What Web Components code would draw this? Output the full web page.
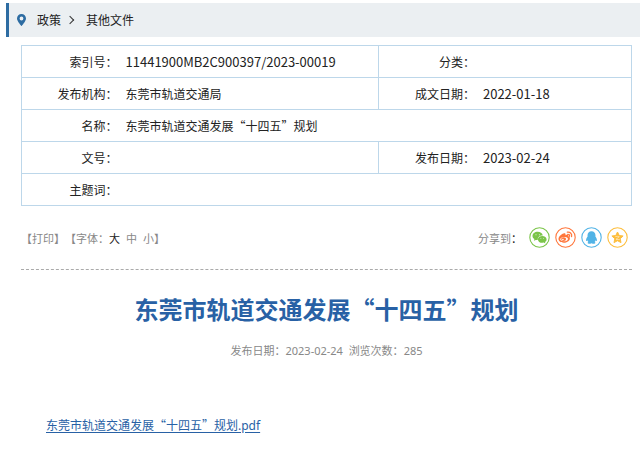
<!DOCTYPE html>
<html lang="zh-CN">
<head>
<meta charset="utf-8">
<title>东莞市轨道交通发展“十四五”规划</title>
<style>
  body { margin: 0; background: #fff; color: #222; font: 12px/20px "Noto Sans CJK SC", sans-serif; --latin: "Noto Sans", "Open Sans", sans-serif; --blue: #2861a5; --line: #bdd7ea; --muted: #888; }
</style>
</head>
<body>
<policy-page>
  <crumb-bar slot="crumbs"><a href="#policy">政策</a><a href="#other">其他文件</a></crumb-bar>
  <info-table></info-table>
  <doc-tools></doc-tools>
  <doc-article>
    <span slot="title">东莞市轨道交通发展“十四五”规划</span>
    <file-link slot="file"></file-link>
  </doc-article>
</policy-page>

<script>
const define = (name, html) => {
  const template = document.createElement('template');
  template.innerHTML = html;
  customElements.define(name, class extends HTMLElement {
    constructor() {
      super();
      this.attachShadow({ mode: 'open' }).append(template.content.cloneNode(true));
    }
  });
};

define('policy-page', `
  <style>
    :host { display: block; padding-top: 3px; }
    header { margin-left: 6px; }
    main { padding: 8px 8px 0 21px; }
  </style>
  <header><slot name="crumbs"></slot></header>
  <main><slot></slot></main>`);

define('crumb-bar', `
  <style>
    :host { display: flex; align-items: center; height: 34px; padding-left: 8px; border-left: 3px solid #2d6ca2; background: #ebeff2; }
    svg { width: 9px; height: 12px; margin-right: 11px; }
    nav { display: flex; align-items: center; position: relative; }
    ::slotted(a) { color: #222; text-decoration: none; }
    ::slotted(a:not(:last-child)) { margin-right: 25px; }
    i { position: absolute; left: 30px; top: 7px; width: 5px; height: 5px; border: solid #333; border-width: 1px 1px 0 0; transform: rotate(45deg); }
  </style>
  <svg viewBox="0 0 9 12" aria-hidden="true"><path fill="#2d6ca2" fill-rule="evenodd" d="M4.5 0C2 0 0 1.9 0 4.4 0 7.2 4.5 12 4.5 12S9 7.2 9 4.4C9 1.9 7 0 4.5 0Zm0 2.6a1.9 1.9 0 1 1 0 3.8 1.9 1.9 0 0 1 0-3.8Z"/></svg>
  <nav aria-label="当前位置"><slot></slot><i></i></nav>`);

define('info-table', `
  <style>
    :host { display: block; }
    table { width: 100%; table-layout: fixed; border-collapse: collapse; border: 1px solid var(--line); }
    col:nth-child(odd) { width: 16.4%; }
    col:nth-child(2) { width: 42.2%; }
    tr { height: 32px; border-bottom: 1px solid var(--line); }
    th, td { padding: 0 4px; font-weight: 400; line-height: 20px; }
    th { text-align: right; }
    td { text-align: left; }
    td + th { border-left: 1px solid var(--line); }
    .latin { font-size: 13px; }
  </style>
  <table>
    <colgroup><col><col><col><col></colgroup>
    <tbody>
      <tr><th scope="row">索引号：</th><td class="latin">11441900MB2C900397/2023-00019</td><th scope="row">分类：</th><td></td></tr>
      <tr><th scope="row">发布机构：</th><td>东莞市轨道交通局</td><th scope="row">成文日期：</th><td class="latin">2022-01-18</td></tr>
      <tr><th scope="row">名称：</th><td colspan="3">东莞市轨道交通发展“十四五”规划</td></tr>
      <tr><th scope="row">文号：</th><td></td><th scope="row">发布日期：</th><td class="latin">2023-02-24</td></tr>
      <tr><th scope="row">主题词：</th><td colspan="3"></td></tr>
    </tbody>
  </table>`);

define('doc-tools', `
  <style>
    :host { display: flex; justify-content: space-between; align-items: center; height: 63px; border-bottom: 1px dashed #aaa; font-size: 11px; color: var(--muted); }
    div { display: flex; align-items: center; }
    button { border: 0; padding: 0; background: none; font: inherit; color: inherit; cursor: pointer; }
    .size { display: flex; gap: 6px; }
    .on, b { color: #222; }
    b { font-weight: 400; }
    .share { gap: 5px; padding-right: 4px; }
    .share span { margin-right: 2px; }
  </style>
  <div><button>【打印】</button><span>【字体：</span><span class="size"><button class="on">大</button><button>中</button><button>小</button></span><span>】</span></div>
  <div class="share"><span>分享到<b>：</b></span><share-icon kind="wechat"></share-icon><share-icon kind="weibo"></share-icon><share-icon kind="qq"></share-icon><share-icon kind="qzone"></share-icon></div>`);

const icons = {
  wechat: ['微信', '#7bc549', '<path fill="currentColor" d="M8.700 4.800c-3 0-5.200 1.900-5.200 4.200 0 1.300.7 2.400 1.900 3.100L4.900 13.800l1.900-.9c.6.2 1.300.2 2 .2-.5-2.800 2-4.900 5-4.700-.5-2.200-2.600-3.600-5.100-3.600Z"/><path fill="currentColor" d="M13.300 9c-2.500 0-4.400 1.500-4.400 3.400s1.900 3.400 4.400 3.400l1.400-.2 1.700.9-.4-1.500c1-.6 1.600-1.500 1.600-2.600 0-1.900-1.900-3.400-4.300-3.400Z"/><g fill="#fff"><circle cx="7" cy="7.800" r=".5"/><circle cx="10.400" cy="7.800" r=".5"/><circle cx="11.900" cy="11.500" r=".4"/><circle cx="14.700" cy="11.500" r=".4"/></g>'],
  weibo: ['微博', '#ff763b', '<path fill="currentColor" fill-rule="evenodd" d="M8.500 6.600c1.300-.6 2.400 0 2 1.600 1.900-.7 3.500-.4 3 1.300 1.100.3 1.500 1 1.400 1.900-.2 2.500-3 4.300-6.100 4.300-3.200 0-5.500-1.500-5.300-3.900C3.700 9.700 6.300 7.300 8.500 6.600Zm.7 3.300c-2.300 0-4 1.100-4 2.400s1.600 2 3.700 2 4-1 4-2.400-1.500-2-3.700-2Z"/><ellipse cx="8.600" cy="12.100" rx="2.500" ry="1.900" fill="currentColor"/><circle cx="7.900" cy="12.500" r=".8" fill="#fff"/><path d="M12.300 5.200c2.900-.5 5 1.800 4.300 4.500M12.700 7.300c1.300-.2 2.200.8 1.900 2" fill="none" stroke="currentColor" stroke-width="1.200" stroke-linecap="round"/>'],
  qq: ['QQ', '#51b3e6', '<path fill="currentColor" d="M10.500 4.200c-2.500 0-4 1.800-4 4.200l.1 1.200c-1 1.300-1.700 2.700-1.500 4.200.1.400.5.3 1.200-.6.200.8.600 1.400 1.100 1.900-1.400.7-.9 1.700.5 1.700 1 0 1.900-.1 2.600-.6.700.5 1.600.6 2.600.6 1.400 0 1.900-1 .5-1.700.5-.5.9-1.100 1.100-1.900.7.900 1.100 1 1.200.6.200-1.500-.5-2.900-1.500-4.200l.1-1.200c0-2.400-1.500-4.200-4-4.200Z"/>'],
  qzone: ['QQ空间', '#fdbe3d', '<path fill="currentColor" stroke="currentColor" stroke-linejoin="round" d="m10.500 5 1.700 3.500 3.900.5-2.900 2.700.8 3.900-3.500-1.900L7 15.600l.8-3.900L4.900 9l3.900-.5Z"/><path d="M8.300 9.600q2.200-.5 4 .1l-3.300 2.600q2.200.5 3.900.1" fill="none" stroke="#fff" stroke-width=".6" opacity=".8"/>']
};
customElements.define('share-icon', class extends HTMLElement {
  connectedCallback() {
    const [label, color, art] = icons[this.getAttribute('kind')];
    this.attachShadow({ mode: 'open' }).innerHTML = `
      <style>:host { display: block; } a { display: block; color: ${color}; } svg { display: block; width: 21px; height: 21px; }</style>
      <a href="#share" aria-label="${label}"><svg viewBox="0 0 21 21"><circle cx="10.500" cy="10.500" r="9.700" fill="#fff" stroke="currentColor" stroke-width="1.100"/>${art}</svg></a>`;
  }
});

define('doc-article', `
  <style>
    :host { display: block; padding-top: 22px; }
    h1 { margin: 0; text-align: center; font-size: 24px; line-height: 34px; font-weight: 700; color: var(--blue); }
    p { margin: 14px 0 54px; text-align: center; font-size: 11px; line-height: 20px; color: var(--muted); white-space: pre; }
    .latin { font-family: var(--latin); }
    section { padding-left: 25px; }
  </style>
  <h1><slot name="title"></slot></h1>
  <p>发布日期：<span class="latin">2023-02-24  </span>浏览次数：<span class="latin">285</span></p>
  <section><slot name="file"></slot></section>`);

define('file-link', `
  <style>
    :host { display: block; }
    a { color: var(--blue); text-decoration: underline; text-underline-offset: 2px; }
    span { font-family: var(--latin); }
  </style>
  <a href="#pdf">东莞市轨道交通发展“十四五”规划<span>.pdf</span></a>`);
</script>
</body>
</html>
